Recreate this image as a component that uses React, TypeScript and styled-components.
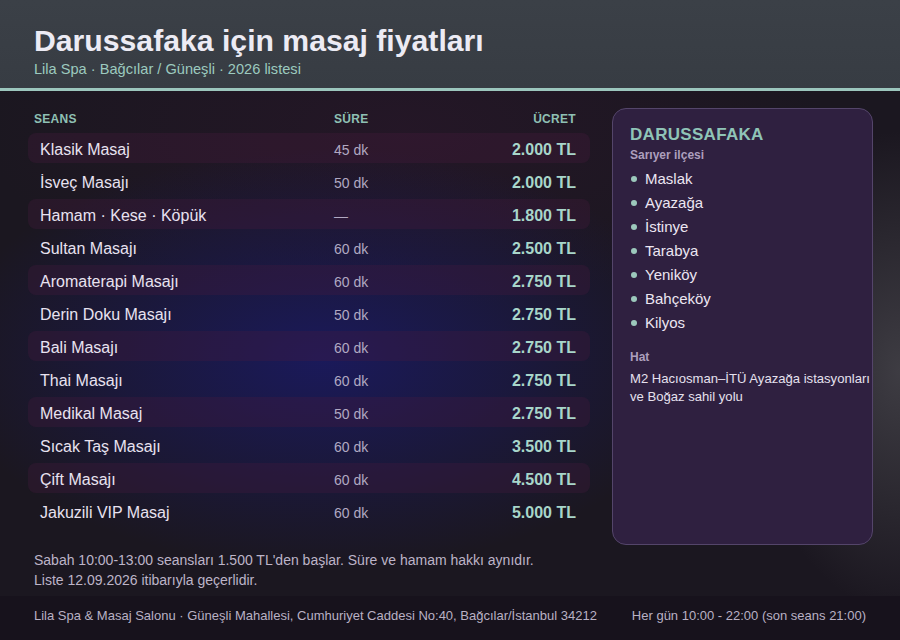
import React from "react";
import styled, { createGlobalStyle } from "styled-components";

const Global = createGlobalStyle`
  html, body { margin: 0; padding: 0; }
  body { font-family: "Liberation Sans", Arial, sans-serif; background: #1a1520; }
  * { box-sizing: border-box; }
`;

const Page = styled.div`
  width: 900px;
  height: 640px;
  display: flex;
  flex-direction: column;
  overflow: hidden;
  background:
    radial-gradient(ellipse 380px 210px at 36% 56%, rgba(26, 26, 105, 0.8), rgba(26, 26, 105, 0) 100%),
    radial-gradient(ellipse 150px 240px at 100% 58%, rgba(85, 85, 90, 0.6), rgba(85, 85, 90, 0) 100%),
    radial-gradient(ellipse 420px 180px at 45% 20%, rgba(45, 22, 45, 0.5), rgba(45, 22, 45, 0) 100%),
    #1b1720;
`;

const Header = styled.header`
  height: 91px;
  padding: 24px 34px 0;
  background: linear-gradient(180deg, #3b4047 0%, #373c43 100%);
  border-bottom: 3px solid #9cc6bd;
`;

const Title = styled.h1`
  margin: 0;
  font-size: 30.2px;
  line-height: 34px;
  font-weight: 700;
  color: #ecebf4;
`;

const Subtitle = styled.div`
  margin-top: 2px;
  font-size: 14.6px;
  line-height: 18px;
  color: #9ccabf;
`;

const Main = styled.main`
  flex: 1;
  padding: 18px 27px 0 28px;
  display: flex;
  flex-direction: column;
`;

const Columns = styled.div`
  display: grid;
  grid-template-columns: 562px 261px;
  column-gap: 22px;
  align-items: start;
`;

const Table = styled.div`
  display: flex;
  flex-direction: column;
  gap: 3px;
`;

const HeadRow = styled.div`
  display: grid;
  grid-template-columns: 300px 1fr auto;
  align-items: center;
  height: 20px;
  padding: 0 14px 0 6px;
  margin-bottom: 1px;
  font-size: 12px;
  font-weight: 700;
  letter-spacing: 0.3px;
  color: #8fc0b4;
`;

const HeadCell = styled.div<{ $right?: boolean }>`
  text-align: ${(p) => (p.$right ? "right" : "left")};
`;

const Row = styled.div<{ $alt: boolean }>`
  display: grid;
  grid-template-columns: 294px 1fr auto;
  align-items: center;
  height: 30px;
  padding: 3px 14px 0 12px;
  border-radius: 8px;
  background: ${(p) => (p.$alt ? "rgba(72, 28, 62, 0.3)" : "transparent")};
`;

const Name = styled.div`
  font-size: 16px;
  color: #e8e2f0;
`;

const Duration = styled.div`
  font-size: 14px;
  color: #b1a9c2;
`;

const Price = styled.div`
  font-size: 16px;
  font-weight: 700;
  color: #a8d6ca;
  text-align: right;
`;

const Panel = styled.aside`
  height: 437px;
  margin-top: -1px;
  padding: 16px 17px;
  border-radius: 14px;
  background: #2f2040;
  border: 1px solid #54456a;
`;

const PanelTitle = styled.div`
  font-size: 17px;
  line-height: 20px;
  font-weight: 700;
  letter-spacing: 0.3px;
  color: #8fc4b7;
`;

const PanelLabel = styled.div<{ $top?: number }>`
  margin-top: ${(p) => p.$top ?? 0}px;
  font-size: 12px;
  line-height: 15px;
  font-weight: 700;
  color: #ad9fbd;
`;

const List = styled.ul`
  list-style: none;
  margin: 3px 0 0;
  padding: 0;
  display: flex;
  flex-direction: column;
`;

const Item = styled.li`
  display: flex;
  align-items: center;
  gap: 8px;
  height: 24px;
  font-size: 15px;
  color: #ece6f2;
  &::before {
    content: "";
    width: 6px;
    height: 6px;
    margin-left: 1px;
    margin-top: 2px;
    border-radius: 50%;
    background: #9cc8bc;
    flex: none;
  }
`;

const Route = styled.div`
  margin-top: 5px;
  font-size: 13.1px;
  line-height: 18px;
  color: #e6e0ee;
  white-space: nowrap;
`;

const Notes = styled.div`
  margin-top: 5px;
  padding-left: 6px;
  font-size: 14px;
  line-height: 20px;
  color: #bdb4c8;
`;

const Footer = styled.footer`
  height: 44px;
  flex: none;
  padding: 0 34px 6px;
  display: flex;
  align-items: center;
  justify-content: space-between;
  background: #17121c;
  font-size: 13px;
  color: #b9b1c4;
`;

const services = [
  ["Klasik Masaj", "45 dk", "2.000 TL"],
  ["İsveç Masajı", "50 dk", "2.000 TL"],
  ["Hamam · Kese · Köpük", "—", "1.800 TL"],
  ["Sultan Masajı", "60 dk", "2.500 TL"],
  ["Aromaterapi Masajı", "60 dk", "2.750 TL"],
  ["Derin Doku Masajı", "50 dk", "2.750 TL"],
  ["Bali Masajı", "60 dk", "2.750 TL"],
  ["Thai Masajı", "60 dk", "2.750 TL"],
  ["Medikal Masaj", "50 dk", "2.750 TL"],
  ["Sıcak Taş Masajı", "60 dk", "3.500 TL"],
  ["Çift Masajı", "60 dk", "4.500 TL"],
  ["Jakuzili VIP Masaj", "60 dk", "5.000 TL"],
];

const places = ["Maslak", "Ayazağa", "İstinye", "Tarabya", "Yeniköy", "Bahçeköy", "Kilyos"];

export default function App() {
  return (
    <Page>
      <Global />
      <Header>
        <Title>Darussafaka için masaj fiyatları</Title>
        <Subtitle>Lila Spa · Bağcılar / Güneşli · 2026 listesi</Subtitle>
      </Header>
      <Main>
        <Columns>
          <Table>
            <HeadRow>
              <HeadCell>SEANS</HeadCell>
              <HeadCell>SÜRE</HeadCell>
              <HeadCell $right>ÜCRET</HeadCell>
            </HeadRow>
            {services.map(([n, d, p], i) => (
              <Row key={n} $alt={i % 2 === 0}>
                <Name>{n}</Name>
                <Duration>{d}</Duration>
                <Price>{p}</Price>
              </Row>
            ))}
          </Table>
          <Panel>
            <PanelTitle>DARUSSAFAKA</PanelTitle>
            <PanelLabel $top={3}>Sarıyer ilçesi</PanelLabel>
            <List>
              {places.map((p) => (
                <Item key={p}>{p}</Item>
              ))}
            </List>
            <PanelLabel $top={16}>Hat</PanelLabel>
            <Route>
              M2 Hacıosman–İTÜ Ayazağa istasyonları
              <br />
              ve Boğaz sahil yolu
            </Route>
          </Panel>
        </Columns>
        <Notes>
          Sabah 10:00-13:00 seansları 1.500 TL'den başlar. Süre ve hamam hakkı aynıdır.
          <br />
          Liste 12.09.2026 itibarıyla geçerlidir.
        </Notes>
      </Main>
      <Footer>
        <span>Lila Spa &amp; Masaj Salonu · Güneşli Mahallesi, Cumhuriyet Caddesi No:40, Bağcılar/İstanbul 34212</span>
        <span>Her gün 10:00 - 22:00 (son seans 21:00)</span>
      </Footer>
    </Page>
  );
}
